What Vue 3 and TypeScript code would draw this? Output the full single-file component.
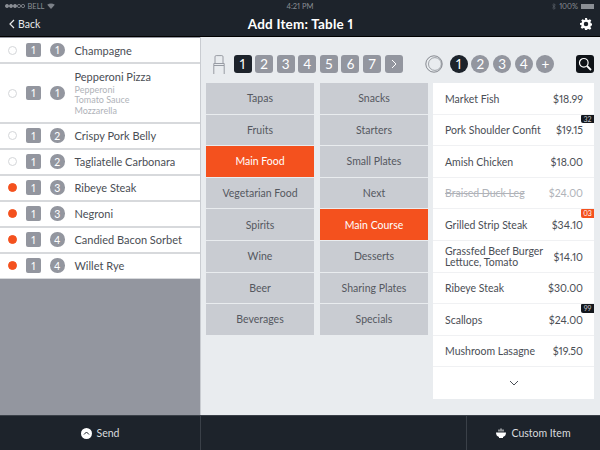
<script setup lang="ts">
type OrderRow = { name: string; qty: number; course: number; sent: boolean; mods?: string[] };
type MenuRow = { name: string; sub?: string; price: string; off?: boolean; badge?: string; hot?: boolean };

const orders: OrderRow[] = [
  { name: "Champagne", qty: 1, course: 1, sent: false },
  { name: "Pepperoni Pizza", qty: 1, course: 1, sent: false, mods: ["Pepperoni", "Tomato Sauce", "Mozzarella"] },
  { name: "Crispy Pork Belly", qty: 1, course: 2, sent: false },
  { name: "Tagliatelle Carbonara", qty: 1, course: 2, sent: false },
  { name: "Ribeye Steak", qty: 1, course: 3, sent: true },
  { name: "Negroni", qty: 1, course: 3, sent: true },
  { name: "Candied Bacon Sorbet", qty: 1, course: 4, sent: true },
  { name: "Willet Rye", qty: 1, course: 4, sent: true },
];

const groups = ["Tapas", "Fruits", "Main Food", "Vegetarian Food", "Spirits", "Wine", "Beer", "Beverages"];
const courses = ["Snacks", "Starters", "Small Plates", "Next", "Main Course", "Desserts", "Sharing Plates", "Specials"];

const menu: MenuRow[] = [
  { name: "Market Fish", price: "$18.99" },
  { name: "Pork Shoulder Confit", price: "$19.15", badge: "32" },
  { name: "Amish Chicken", price: "$18.00" },
  { name: "Braised Duck Leg", price: "$24.00", off: true },
  { name: "Grilled Strip Steak", price: "$34.10", badge: "03", hot: true },
  { name: "Grassfed Beef Burger", sub: "Lettuce, Tomato", price: "$14.10" },
  { name: "Ribeye Steak", price: "$30.00" },
  { name: "Scallops", price: "$24.00", badge: "99" },
  { name: "Mushroom Lasagne", price: "$19.50" },
];
</script>

<template>
  <div class="app">
    <header class="top">
      <div class="status">
        <div class="status-left">
          <span class="dots"><i v-for="n in 3" :key="n" class="dot on"></i><i v-for="n in 2" :key="n" class="dot"></i></span>
          <span>BELL</span>
          <svg width="8" height="6" viewBox="0 0 8 6"><path d="M4 6 L0.2 1.8 Q4 -1 7.8 1.8 Z" fill="#7c8188" /></svg>
        </div>
        <div class="status-mid">4:21 PM</div>
        <div class="status-right">
          <svg width="4" height="7" viewBox="0 0 4 7"><path d="M0.3 1.8 L3.4 4.8 L1.9 6.4 V0.6 L3.4 2.2 L0.3 5.2" fill="none" stroke="#5a6068" stroke-width="0.7" /></svg>
          <span>100%</span>
          <span class="battery"></span>
        </div>
      </div>
      <div class="nav">
        <div class="back">
          <svg width="6" height="10" viewBox="0 0 6 10"><path d="M5 1 L1 5 L5 9" fill="none" stroke="#e8eaec" stroke-width="1.2" /></svg>
          <span>Back</span>
        </div>
        <div class="title">Add Item: Table 1</div>
        <div class="gear">
          <svg width="12" height="12" viewBox="0 0 24 24"><path fill="#fff" fill-rule="evenodd" d="M10 0h4l.7 3.3 2.2.9L19.8 2.4l2.8 2.8-1.8 2.9.9 2.2 3.3.7v4l-3.3.7-.9 2.2 1.8 2.9-2.8 2.8-2.9-1.8-2.2.9L14 24h-4l-.7-3.3-2.2-.9-2.9 1.8-2.8-2.8 1.8-2.9-.9-2.2L0 14v-4l3.3-.7.9-2.2L2.4 5.2l2.8-2.8 2.9 1.8 2.2-.9zM12 7.5a4.5 4.5 0 1 0 0 9 4.5 4.5 0 0 0 0-9z" /></svg>
        </div>
      </div>
    </header>

    <main class="body">
      <aside class="order">
        <div v-for="o in orders" :key="o.name" class="order-row">
          <span class="mark" :class="{ sent: o.sent }"></span>
          <span class="qty">{{ o.qty }}</span>
          <span class="course">{{ o.course }}</span>
          <div class="order-text">
            <div class="order-name">{{ o.name }}</div>
            <div v-for="m in o.mods" :key="m" class="mod">{{ m }}</div>
          </div>
        </div>
      </aside>

      <section class="picker">
        <div class="tools">
          <svg class="chair" width="12" height="19" viewBox="0 0 12 19">
            <path d="M2 8 V1.8 Q2 .6 3.2 .6 H8.8 Q10 .6 10 1.8 V8 M.8 8.5 H11.2 V10.5 H.8 Z M.8 10.5 V19 M11.2 10.5 V19" fill="none" stroke="#8f939b" stroke-width="0.9" />
          </svg>
          <div class="seats">
            <span v-for="n in 7" :key="n" class="seat" :class="{ active: n === 1 }">{{ n }}</span>
            <span class="seat">
              <svg width="6" height="10" viewBox="0 0 6 10"><path d="M1 1 L5 5 L1 9" fill="none" stroke="#fff" stroke-width="1" /></svg>
            </span>
          </div>
          <svg class="all" width="18" height="18" viewBox="0 0 18 18">
            <circle cx="9" cy="9" r="8.2" fill="none" stroke="#5c6068" stroke-width="0.7" />
            <circle cx="9.9" cy="9" r="6.4" fill="none" stroke="#6a6e76" stroke-width="0.6" />
          </svg>
          <div class="rounds">
            <span v-for="n in 4" :key="n" class="round" :class="{ active: n === 1 }">{{ n }}</span>
            <span class="round plus">+</span>
          </div>
          <div class="search">
            <svg width="14" height="14" viewBox="0 0 14 14">
              <circle cx="5.8" cy="5.8" r="4.3" fill="none" stroke="#fff" stroke-width="1.2" />
              <path d="M9 9 L13 13" stroke="#fff" stroke-width="1.8" />
            </svg>
          </div>
        </div>

        <div class="columns">
          <div class="cats">
            <div v-for="g in groups" :key="g" class="cat" :class="{ active: g === 'Main Food' }">{{ g }}</div>
          </div>
          <div class="cats">
            <div v-for="c in courses" :key="c" class="cat" :class="{ active: c === 'Main Course' }">{{ c }}</div>
          </div>
          <div class="menu">
            <div v-for="m in menu" :key="m.name" class="menu-row" :class="{ off: m.off }">
              <div class="menu-name">
                {{ m.name }}<template v-if="m.sub"><br />{{ m.sub }}</template>
              </div>
              <div class="price">{{ m.price }}</div>
              <span v-if="m.badge" class="badge" :class="{ hot: m.hot }">{{ m.badge }}</span>
            </div>
            <div class="more">
              <svg width="10" height="6" viewBox="0 0 10 6"><path d="M1 1 L5 5 L9 1" fill="none" stroke="#4a4f57" stroke-width="1" /></svg>
            </div>
          </div>
        </div>
      </section>
    </main>

    <footer class="foot">
      <div class="send">
        <svg width="11" height="11" viewBox="0 0 11 11">
          <circle cx="5.5" cy="5.5" r="5.5" fill="#fff" />
          <path d="M3 6.5 L5.5 4 L8 6.5" fill="none" stroke="#1d232b" stroke-width="1" />
        </svg>
        <span>Send</span>
      </div>
      <div class="gap"></div>
      <div class="custom">
        <svg width="10" height="10" viewBox="0 0 10 10">
          <path d="M0 4.5 H10 Q10 8 7 9 V10 H3 V9 Q0 8 0 4.5 Z" fill="#fff" />
          <path d="M3 3.5 V1.5 M5 3.5 V.5 M7 3.5 V1.5" stroke="#fff" stroke-width="1" />
        </svg>
        <span>Custom Item</span>
      </div>
    </footer>
  </div>
</template>

<style scoped>
.app {
  width: 600px;
  height: 450px;
  display: flex;
  flex-direction: column;
  overflow: hidden;
  font-family: Lato, "Liberation Sans", sans-serif;
  font-variant-numeric: proportional-nums;
  background: #e9ecef;
  color: #4a4e55;
}
.top {
  height: 37px;
  flex: none;
  background: #1d232b;
  border-bottom: 1px solid #000;
  box-sizing: border-box;
  color: #fff;
}
.status {
  display: grid;
  grid-template-columns: 1fr auto 1fr;
  align-items: center;
  height: 12px;
  padding: 0 5px;
  font-size: 7.5px;
  color: #8a8e94;
}
.status-left {
  display: flex;
  align-items: center;
  gap: 3px;
}
.dots {
  display: flex;
  gap: 0.5px;
}
.dot {
  width: 3.5px;
  height: 3.5px;
  border-radius: 50%;
  box-sizing: border-box;
  border: 0.5px solid #8a8e94;
}
.dot.on {
  background: #8a8e94;
}
.status-right {
  display: flex;
  justify-content: flex-end;
  align-items: center;
  gap: 3px;
}
.battery {
  width: 13px;
  height: 5px;
  background: #8a8e94;
  margin-right: 1px;
}
.nav {
  display: grid;
  grid-template-columns: 1fr auto 1fr;
  align-items: center;
  height: 23px;
  padding: 0 8px 0 9px;
}
.back {
  display: flex;
  align-items: center;
  gap: 3px;
  font-size: 10.5px;
  color: #e8eaec;
}
.title {
  font-size: 13.5px;
  font-weight: 700;
  letter-spacing: 0.2px;
}
.gear {
  display: flex;
  justify-content: flex-end;
}
.body {
  flex: 1;
  display: flex;
  min-height: 0;
}
.order {
  width: 200px;
  flex: none;
  background: #93969f;
  border-right: 1px solid #c9ccd1;
}
.order-row {
  display: flex;
  align-items: center;
  min-height: 24px;
  padding: 0 0 0 8px;
  background: #fff;
  border-bottom: 2px solid #d7d9dc;
}
.order-row:first-child {
  margin-top: 1px;
}
.order-row:last-child {
  border-bottom: 1px solid #d7d9dc;
}
.mark {
  width: 9px;
  height: 9px;
  border-radius: 50%;
  border: 1px solid #d4d6d9;
  box-sizing: border-box;
  flex: none;
  margin-right: 9px;
}
.mark.sent {
  background: #f4511e;
  border-color: #f4511e;
}
.qty,
.course {
  width: 14.5px;
  height: 14.5px;
  flex: none;
  display: flex;
  align-items: center;
  justify-content: center;
  background: #93969f;
  color: #fff;
  font-size: 10.5px;
  border-radius: 2px;
}
.course {
  border-radius: 50%;
  margin-left: 9.5px;
}
.order-text {
  margin-left: 10px;
  font-size: 11px;
  color: #4a4e55;
}
.order-row:has(.mod) {
  padding-top: 6px;
  padding-bottom: 5.5px;
}
.order-name {
  line-height: 13px;
}
.mod {
  font-size: 9px;
  line-height: 10.5px;
  color: #b0b3b9;
}
.order-name + .mod {
  margin-top: 1.5px;
}
.picker {
  flex: 1;
  min-width: 0;
  padding: 0 6px 0 5px;
}
.tools {
  display: flex;
  align-items: center;
  height: 46px;
  padding-top: 8px;
  box-sizing: border-box;
}
.chair {
  margin-left: 7px;
}
.seats {
  display: flex;
  gap: 3.6px;
  margin-left: 8.5px;
}
.seat {
  width: 18px;
  height: 18.5px;
  display: flex;
  align-items: center;
  justify-content: center;
  background: #93969f;
  color: #fff;
  border-radius: 3px;
  font-size: 13.5px;
}
.seat.active {
  background: #1d232b;
}
.all {
  margin-left: 22px;
}
.rounds {
  display: flex;
  gap: 3.7px;
  margin-left: 7px;
}
.round {
  width: 18px;
  height: 18.5px;
  display: flex;
  align-items: center;
  justify-content: center;
  border-radius: 50%;
  background: #93969f;
  color: #fff;
  font-size: 13.5px;
}
.round.active {
  background: #1d232b;
}
.search {
  margin-left: auto;
  width: 18px;
  height: 18.5px;
  display: flex;
  align-items: center;
  justify-content: center;
  background: #0f1318;
  border-radius: 3px;
}
.columns {
  display: flex;
  align-items: flex-start;
  gap: 6px;
}
.cats {
  width: 108px;
  display: grid;
  grid-auto-rows: 30.6px;
  row-gap: 1px;
  flex: none;
}
.cat {
  display: flex;
  align-items: center;
  justify-content: center;
  background: #c9ccd2;
  font-size: 10.5px;
  color: #55585f;
}
.cat.active {
  background: #f4511e;
  color: #fff;
}
.menu {
  width: 161px;
  flex: none;
  margin-left: -1px;
  background: #fff;
}
.menu-row {
  position: relative;
  height: 31.6px;
  box-sizing: border-box;
  display: flex;
  align-items: center;
  justify-content: space-between;
  padding: 1.5px 11px 0 12px;
  border-bottom: 1px solid #f0f1f3;
  font-size: 10.5px;
  line-height: 11px;
}
.menu-row.off {
  color: #b0b3b9;
}
.menu-row.off .menu-name {
  text-decoration: line-through;
}
.price {
  font-size: 10.5px;
}
.badge {
  position: absolute;
  top: 0;
  right: 0;
  width: 13px;
  height: 8.5px;
  line-height: 8.5px;
  font-size: 7px;
  text-align: center;
  background: #14181e;
  color: #c4c7cb;
  border-radius: 1px 0 0 2px;
}
.badge.hot {
  background: #f4511e;
  color: #fff;
}
.more {
  height: 31.6px;
  display: flex;
  align-items: center;
  justify-content: center;
}
.foot {
  height: 35px;
  flex: none;
  display: flex;
  background: #1d232b;
  border-top: 1px solid #3a4048;
  box-sizing: border-box;
  color: #d9dbde;
  font-size: 10.5px;
}
.send {
  width: 200px;
  display: flex;
  align-items: center;
  justify-content: center;
  gap: 5px;
}
.gap {
  flex: 1;
  border-left: 1px solid #3a4048;
}
.custom {
  width: 133px;
  display: flex;
  align-items: center;
  justify-content: center;
  gap: 5px;
  border-left: 1px solid #3a4048;
}
</style>
